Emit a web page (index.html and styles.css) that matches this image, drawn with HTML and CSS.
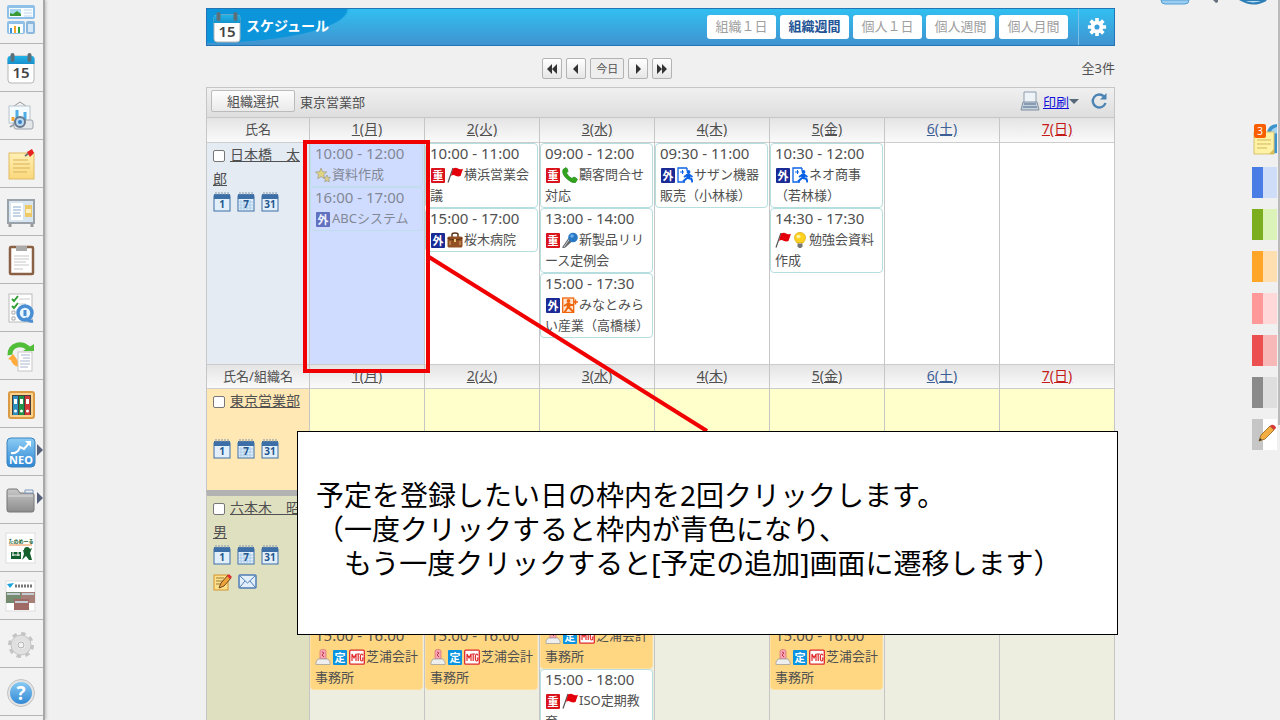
FILE: index.html
```html
<!DOCTYPE html>
<html lang="ja">
<head>
<meta charset="utf-8">
<title>スケジュール</title>
<link rel="stylesheet" href="styles.css">
</head>
<body>
<svg class="gradients" aria-hidden="true">
  <defs>
    <linearGradient id="g-blue" x1="0" y1="0" x2="0" y2="1"><stop offset="0" stop-color="#8ccdf5"/><stop offset="1" stop-color="#2f86d3"/></linearGradient>
    <linearGradient id="g-gray" x1="0" y1="0" x2="0" y2="1"><stop offset="0" stop-color="#c8c8c8"/><stop offset="1" stop-color="#8c8c8c"/></linearGradient>
    <linearGradient id="g-cal" x1="0" y1="0" x2="0" y2="1"><stop offset="0" stop-color="#22b4e8"/><stop offset="1" stop-color="#1690cc"/></linearGradient>
    <linearGradient id="g-note" x1="0" y1="0" x2="0" y2="1"><stop offset="0" stop-color="#fff0b4"/><stop offset="1" stop-color="#fbd87c"/></linearGradient>
  </defs>
</svg>
<svg class="symbols" aria-hidden="true">
  <symbol id="calendar15" viewBox="0 0 32 32">
    <rect x="3" y="4" width="26" height="27" rx="3" fill="#fff" stroke="#b5b5b5"/>
    <path d="M2.500 12V7a3 3 0 0 1 3-3h21a3 3 0 0 1 3 3v5z" fill="url(#g-cal)"/>
    <rect x="5.500" y="1" width="4" height="9" rx="2" fill="#5d6f78"/><rect x="22.500" y="1" width="4" height="9" rx="2" fill="#5d6f78"/>
    <text x="16" y="26" text-anchor="middle" font-size="15" font-weight="600" fill="#444">15</text>
  </symbol>
  <symbol id="cal-1" viewBox="0 0 18 20"><rect x="1" y="4" width="16" height="15" fill="#e2effa" stroke="#3c6ea8"/><rect x="1" y="2" width="16" height="5" fill="#3c6ea8"/><path d="M3 3V0M6 3V0M9 3V0M12 3V0M15 3V0" stroke="#8295a9"/><text x="9" y="16" text-anchor="middle" font-size="10" font-weight="700" fill="#24568e">1</text></symbol>
  <symbol id="cal-7" viewBox="0 0 18 20"><rect x="1" y="4" width="16" height="15" fill="#e2effa" stroke="#3c6ea8"/><path d="M4 8v10M7 8v10M10 8v10M13 8v10M2 10h14M2 13h14M2 16h14" stroke="#a9cce8"/><rect x="1" y="2" width="16" height="5" fill="#3c6ea8"/><path d="M3 3V0M6 3V0M9 3V0M12 3V0M15 3V0" stroke="#8295a9"/><text x="9" y="16" text-anchor="middle" font-size="10" font-weight="700" fill="#24568e">7</text></symbol>
  <symbol id="cal-31" viewBox="0 0 18 20"><rect x="1" y="4" width="16" height="15" fill="#e2effa" stroke="#3c6ea8"/><rect x="1" y="2" width="16" height="5" fill="#3c6ea8"/><path d="M3 3V0M6 3V0M9 3V0M12 3V0M15 3V0" stroke="#8295a9"/><text x="9" y="16" text-anchor="middle" font-size="10" font-weight="700" fill="#24568e">31</text></symbol>
  <symbol id="imp" viewBox="0 0 16 16"><rect x="1" y="1" width="14" height="15" rx="1" fill="#d9121c"/><text x="8" y="13" text-anchor="middle" font-size="11" font-weight="700" fill="#fff">重</text></symbol>
  <symbol id="out" viewBox="0 0 16 16"><rect x="1" y="1" width="14" height="15" rx="1" fill="#1b2b96"/><text x="8" y="13" text-anchor="middle" font-size="11" font-weight="700" fill="#fff">外</text></symbol>
  <symbol id="fixed" viewBox="0 0 16 16"><rect x="1" y="1" width="14" height="15" rx="1" fill="#0a93e0"/><text x="8" y="13" text-anchor="middle" font-size="11" font-weight="700" fill="#fff">定</text></symbol>
  <symbol id="mtg" viewBox="0 0 16 16"><rect x=".7" y="1.200" width="14.600" height="14" rx="1" fill="#fff" stroke="#e02a2a" stroke-width="1.300"/><path d="M3 12V5l2 4 2-4v7M7.500 5h3.500M9.200 5v7M14 6.500Q13.500 5 12.700 5 11.300 5.200 11.300 8.500t1.400 3.500Q14 12 14 9h-1.200" fill="none" stroke="#e02a2a" stroke-width="1.200"/></symbol>
  <symbol id="flag" viewBox="0 0 16 16"><path d="M1 15.500L6 1" stroke="#555" stroke-width="1.200"/><path d="M6 1.500q3-1.500 5 0t5 .2L13.500 9q-2.500 1-5-.3T4 9z" fill="#e3000b"/></symbol>
  <symbol id="star" viewBox="0 0 16 16"><path d="M6 1l1.700 3.800 4.100.1-3 2.800 1.100 4L6.200 9.600l-3.600 2.100 1-4L.5 5l4.100-.3z" fill="#e9cf2e" stroke="#7c6d35" stroke-width=".7"/><path d="M12 8l1.100 2.300 2.500.2-1.800 1.800.5 2.600-2.300-1.200-2.300 1.100.5-2.400-1.800-1.800 2.500-.3z" fill="#e3c33d" stroke="#6c633e" stroke-width=".6"/></symbol>
  <symbol id="bag" viewBox="0 0 16 16"><path d="M5 5V2.500Q5 1 8 1t3 1.500V5" fill="none" stroke="#5a3217" stroke-width="1.500"/><rect x=".5" y="4.500" width="15" height="11" rx="1.500" fill="#935025"/><path d="M.5 6Q8 10 15.500 6" fill="none" stroke="#5d2f10"/><path d="M3 9v4M13 9v4" stroke="#d9a86e"/><rect x="7" y="7" width="2" height="3" fill="#f0c980"/></symbol>
  <symbol id="phone" viewBox="0 0 16 16"><path d="M1 2.500L4 .5q2 1 2 4L4.500 6Q6 9.500 10 11.500L11.500 10q2.500 0 4 2.500l-2 3q-4 1-9-4T1 2.500z" fill="#32a51d" stroke="#167b15" stroke-width=".6"/></symbol>
  <symbol id="mic" viewBox="0 0 16 16"><path d="M6.500 6L0 15.500q2 1 4-.5l6-5.500z" fill="#64686c"/><path d="M7.500 7L2 15" stroke="#c5cbd0"/><circle cx="11" cy="5.500" r="4.800" fill="#2878c4"/><circle cx="10" cy="4" r="1.800" fill="#69aeea"/></symbol>
  <symbol id="leave" viewBox="0 0 16 16"><path d="M10 1H1v14h7M10 1v3" fill="none" stroke="#0a62e6" stroke-width="1.300"/><path d="M3 5h4M5.500 3v4" stroke="#0a62e6"/><circle cx="11.500" cy="5" r="1.900" fill="#0a62e6"/><path d="M9 7h4l.5 5h-4z" fill="#0a62e6"/><path d="M10 8L7 10M10 11l-4 3.500M11 11l3.500 1 1 3.500M12 7.500l3.500 2.500" fill="none" stroke="#0a62e6" stroke-width="2"/></symbol>
  <symbol id="arrive" viewBox="0 0 16 16"><rect x=".7" y="1" width="11" height="14.500" fill="#ffe4cf" stroke="#ee650b" stroke-width="1.300"/><circle cx="6.500" cy="4" r="1.900" fill="#ee650b"/><path d="M4.500 6h4l-.5 5.500H5z" fill="#ee650b"/><path d="M5.500 7L2 9M6 10l-3.500 5.500M6.500 10l5 5M7 8h5" fill="none" stroke="#ee650b" stroke-width="2"/><path d="M16 5h-4M13.500 2.500v5" stroke="#ee650b" stroke-width="1.500"/></symbol>
  <symbol id="bulb" viewBox="0 0 16 16"><path d="M5 11Q2.500 8.500 2.500 5.500a5.500 5 0 0 1 11 0Q13.500 8.500 11 11z" fill="#ffd21f" stroke="#d8a000" stroke-width=".7"/><path d="M5.500 11.500h5v3L9 16H7l-1.500-1.500z" fill="#777"/><ellipse cx="6.500" cy="4.500" rx="2" ry="1.800" fill="#fff3a5"/></symbol>
  <symbol id="stamp" viewBox="0 0 16 16"><path d="M5 10V2q0-1.500 3-1.500T11 2v8z" fill="#f5a7b1" stroke="#d75f73" stroke-width=".6"/><path d="M7 3l2 1-2 2 2 2" fill="none" stroke="#c93450"/><path d="M3 10h10l2 3v2.500H1V13z" fill="#eee" stroke="#999" stroke-width=".7"/></symbol>
  <symbol id="edit" viewBox="0 0 20 18"><rect x="1" y="2" width="14" height="15" fill="#ffe08a" stroke="#d2922c"/><path d="M3 5h8M3 8h8M3 11h6" stroke="#9b7a3b"/><path d="M6 15l2-5 7-8 3 3-7 8z" fill="#efa43a" stroke="#73471d"/><path d="M14 3l2-2 3 3-2 2z" fill="#dc3030"/></symbol>
  <symbol id="mail" viewBox="0 0 20 16"><rect x="1" y="1" width="17" height="13" rx="1" fill="#e3effb" stroke="#4e7db5" stroke-width="1.500"/><path d="M2 2l7.500 7L17 2M2 13l5-6M17 13l-5-6" fill="none" stroke="#4e7db5"/></symbol>
</svg>

<nav class="sidebar" aria-label="メニュー">
  <ul>
    <li><svg viewBox="0 0 32 32"><rect x="2" y="1" width="28" height="14" rx="2" fill="#8fc0ea"/><rect x="4" y="4" width="24" height="9" fill="#f7fcff"/><path d="M5 5h11v7H5z" fill="#a5d8f0"/><path d="M5 12v-3l3 1 4-3 4 3v2z" fill="#3c9a36"/><path d="M19 6h8M19 9h8M19 12h8" stroke="#c2d8eb"/><rect x="2" y="17" width="18" height="13" rx="2" fill="#8fc0ea"/><rect x="4" y="20" width="14" height="9" fill="#fff"/><path d="M6 24v5" stroke="#3292d7" stroke-width="2"/><path d="M10 22v7" stroke="#f5a42a" stroke-width="2"/><path d="M14 23v6" stroke="#2ba53a" stroke-width="2"/><rect x="21" y="17" width="9" height="13" rx="2" fill="#8cb8de"/><path d="M23 20h5v8h-5z" fill="#d6e9f8"/></svg></li>
    <li><svg viewBox="0 0 32 32"><use href="#calendar15"/></svg></li>
    <li><svg viewBox="0 0 32 32"><path d="M9 6l6-4 6 4" fill="none" stroke="#999"/><rect x="4" y="6" width="21" height="17" fill="#f4fbff" stroke="#b7c3cb"/><path d="M8 17v4" stroke="#f5a22f" stroke-width="3"/><path d="M12 10v11M20 12v9" stroke="#4daee7" stroke-width="3"/><path d="M5 27l8-5" stroke="#9aa0a8" stroke-width="2"/><rect x="9" y="20" width="19" height="9" rx="2" fill="#e4e7ea" stroke="#9ba2aa"/><circle cx="15" cy="22" r="5" fill="#b8d9f2" stroke="#66788a" stroke-width="2"/><circle cx="15" cy="22" r="2" fill="#3980c4"/></svg></li>
    <li><svg viewBox="0 0 32 32"><rect x="4" y="5" width="25" height="26" fill="url(#g-note)" stroke="#dfba62"/><path d="M8 12h15M8 16h17M8 20h17M8 24h14" stroke="#d9b25a"/><path d="M20 8l4-3" stroke="#777" stroke-width="2"/><path d="M22 4l5-3 2 4-4 4z" fill="#e52121"/></svg></li>
    <li><svg viewBox="0 0 32 32"><path d="M5 28v3M27 28v3" stroke="#999" stroke-width="3"/><rect x="3" y="4" width="26" height="23" fill="#d7e6f0" stroke="#9aa1a8" stroke-width="2"/><path d="M6 7h12v17H6z" fill="#fff"/><path d="M8 11h8M8 14h8M8 17h7M8 20h8" stroke="#88aacc"/><path d="M20 9h7v12h-7z" fill="#efc967"/><path d="M21 13h5v4h-5z" fill="#fff0bd"/></svg></li>
    <li><svg viewBox="0 0 32 32"><rect x="5" y="3" width="23" height="27" rx="1" fill="#fff" stroke="#8a6144" stroke-width="2.500"/><path d="M11 2h11v5H11z" fill="#aaa"/><path d="M9 12h15M9 15h15M9 18h12M9 21h15M9 25h9" stroke="#c7c7c7"/></svg></li>
    <li><svg viewBox="0 0 32 32"><rect x="4" y="2" width="23" height="28" fill="#fff" stroke="#bbb"/><path d="M7 7l2 2 4-5M7 14l2 2 4-5" fill="none" stroke="#319f35" stroke-width="2"/><path d="M7 19h3v3H7zM7 25h3v3H7z" fill="#fff" stroke="#aaa"/><path d="M14 7h11M14 12h7" stroke="#ccc"/><circle cx="20" cy="21" r="7" fill="#e9f5ff" stroke="#4a8fd3" stroke-width="3.500"/><path d="M20 26q4 4 8 3" fill="none" stroke="#4a8fd3" stroke-width="3"/><path d="M20 18v6" stroke="#4a8fd3" stroke-width="3"/></svg></li>
    <li><svg viewBox="0 0 32 32"><path d="M5 15A10 9 0 0 1 24 10" fill="none" stroke="#52bd39" stroke-width="5"/><path d="M18 11h11V4z" fill="#52bd39"/><path d="M8 14l-5 5 3 1q1 5 7 7l2-5q-3-1-4-4z" fill="#ffac3d"/><rect x="13" y="12" width="14" height="19" fill="#fff" stroke="#c5c5c5"/><path d="M16 15h9M18 18h7M15 21h10M15 24h10M15 27h8" stroke="#a8b4cf"/></svg></li>
    <li><svg viewBox="0 0 32 32"><rect x="4" y="4" width="25" height="26" rx="2" fill="#ffd28c" stroke="#db9b45" stroke-width="2"/><path d="M7 7h19v20H7z" fill="#443f3d"/><path d="M8 8h5v19H8z" fill="#2d8fc0"/><path d="M14 8h5v19h-5z" fill="#209249"/><path d="M20 8h5v19h-5z" fill="#cf3737"/><path d="M9 11h3v5H9zM15 11h3v5h-3zM21 11h3v5h-3z" fill="#fff"/><g fill="#fff"><circle cx="10.500" cy="23" r="1.500"/><circle cx="16.500" cy="23" r="1.500"/><circle cx="22.500" cy="23" r="1.500"/></g></svg></li>
    <li class="has-menu"><svg viewBox="0 0 32 32"><rect x="2" y="2" width="28" height="29" rx="4" fill="url(#g-blue)" stroke="#3b83bd"/><path d="M6 17q7 1 9-6l4 2 6-7" fill="none" stroke="#fff" stroke-width="2"/><path d="M20 5h6v6z" fill="#fff"/><text x="16" y="28" text-anchor="middle" font-size="11" font-weight="700" fill="#fff">NEO</text></svg></li>
    <li class="has-menu"><svg viewBox="0 0 32 32"><path d="M2 26V7q0-2 2-2h8l3 4h12q2 0 2 2v15q0 2-2 2H4q-2 0-2-2z" fill="url(#g-gray)" stroke="#777"/><path d="M3 12h25" stroke="#ddd"/><path d="M20 6h8v3h-8z" fill="#eee" stroke="#7d98bd"/></svg></li>
    <li><svg viewBox="0 0 32 32"><rect x="1" y="1" width="29" height="30" fill="#fff" stroke="#ddd"/><text x="16" y="11" text-anchor="middle" font-size="5" font-weight="700" fill="#14602c">たのめーる</text><path d="M4 13h23" stroke="#ed8e4a"/><path d="M6 20h10v7H6zM18 18h5l4-2-2 5 2 7h-3l-3-4-4 4 2-6z" fill="#14602c"/><path d="M8 20v4M13 20v4M7 23h8" stroke="#fff"/><circle cx="22" cy="18" r="3" fill="#14602c"/></svg></li>
    <li><svg viewBox="0 0 32 32"><rect x="1" y="1" width="29" height="30" fill="#fff" stroke="#ddd"/><path d="M2 4l7-1-4 5z" fill="#18a3dc"/><path d="M10 6h18" stroke="#777" stroke-width="3" stroke-dasharray="2 1"/><path d="M1 12h15v11H1z" fill="#758b70"/><path d="M16 12h14v11H16z" fill="#a77f79"/><path d="M9 19h15v11H9z" fill="#9f6965"/><path d="M2 14h13M17 14h12M10 22h13" stroke="#c2cdd4" stroke-width="2"/></svg></li>
    <li><svg viewBox="0 0 32 32"><circle cx="16" cy="17" r="11.500" fill="none" stroke="#c4c4c4" stroke-width="3" stroke-dasharray="4.500 4.500"/><circle cx="16" cy="17" r="7" fill="none" stroke="#e0e0e0" stroke-width="6"/><circle cx="16" cy="17" r="10" fill="none" stroke="#c4c4c4"/><circle cx="16" cy="17" r="3" fill="#f2f2f2" stroke="#b0b0b0"/></svg></li>
    <li><svg viewBox="0 0 32 32"><circle cx="16" cy="17" r="12" fill="url(#g-blue)" stroke="#e4e4e4" stroke-width="2"/><circle cx="16" cy="17" r="13.500" fill="none" stroke="#aaa" stroke-width=".7"/><text x="16" y="24" text-anchor="middle" font-size="19" font-weight="700" fill="#fff">?</text></svg></li>
    <li></li>
  </ul>
</nav>

<main class="content">
  <header class="titlebar">
    <svg class="title-icon" viewBox="0 0 32 32"><use href="#calendar15"/></svg>
    <h1>スケジュール</h1>
    <div class="tabs">
      <button type="button">組織１日</button>
      <button type="button" class="active">組織週間</button>
      <button type="button">個人１日</button>
      <button type="button">個人週間</button>
      <button type="button">個人月間</button>
    </div>
    <button type="button" class="settings" aria-label="設定"><svg viewBox="0 0 22 22"><g stroke="#fff" stroke-width="4"><path d="M11 1v20M1 11h20M4 4l14 14M18 4L4 18"/></g><circle cx="11" cy="11" r="7" fill="#fff"/><circle cx="11" cy="11" r="2.800" fill="#369fdb"/></svg></button>
  </header>

  <div class="pager">
    <button type="button" aria-label="前の週"><svg viewBox="0 0 12 12"><path d="M6 1v10L1 6zM11 1v10L6 6z"/></svg></button>
    <button type="button" aria-label="前の日"><svg viewBox="0 0 12 12"><path d="M8 1v10L3 6z"/></svg></button>
    <button type="button" class="today">今日</button>
    <button type="button" aria-label="次の日"><svg viewBox="0 0 12 12"><path d="M4 1v10l5-5z"/></svg></button>
    <button type="button" aria-label="次の週"><svg viewBox="0 0 12 12"><path d="M1 1v10l5-5zM6 1v10l5-5z"/></svg></button>
    <span class="count">全3件</span>
  </div>

  <div class="toolbar">
    <button type="button" class="select-org">組織選択</button>
    <span>東京営業部</span>
    <div class="tools">
      <svg class="printer" viewBox="0 0 20 20"><path d="M4 11V1h12v10" fill="#eef3f8" stroke="#8d9cab"/><path d="M1 19l2-8h14l2 8z" fill="#c6d2de" stroke="#7f90a2"/><path d="M4 13h12M3 16h14" stroke="#738ba4" stroke-width="1.500"/></svg>
      <a href="#">印刷</a><span class="caret"></span>
      <svg class="reload" viewBox="0 0 18 18"><path d="M14 4.500A6.500 6.500 0 1 0 15.500 11" fill="none" stroke="#4a83b4" stroke-width="2.400"/><path d="M10 7.500h6.500V1z" fill="#4a83b4"/></svg>
    </div>
  </div>

  <table class="schedule">
    <colgroup><col class="name-col"><col><col><col><col><col><col><col></colgroup>
    <tbody>
      <tr class="days"><th>氏名</th><th><a href="#">1(月)</a></th><th><a href="#">2(火)</a></th><th><a href="#">3(水)</a></th><th><a href="#">4(木)</a></th><th><a href="#">5(金)</a></th><th class="sat"><a href="#">6(土)</a></th><th class="sun"><a href="#">7(日)</a></th></tr>
      <tr class="own">
        <td class="person">
          <input type="checkbox" id="p1"><label for="p1"><a href="#">日本橋　太郎</a></label>
          <div class="links"><svg><use href="#cal-1"/></svg><svg><use href="#cal-7"/></svg><svg><use href="#cal-31"/></svg></div>
        </td>
        <td class="selected">
          <div class="event"><time>10:00 - 12:00</time><p><svg><use href="#star"/></svg>資料作成</p></div>
          <div class="event"><time>16:00 - 17:00</time><p><svg><use href="#out"/></svg>ABCシステム</p></div>
        </td>
        <td>
          <div class="event"><time>10:00 - 11:00</time><p><svg><use href="#imp"/></svg><svg><use href="#flag"/></svg>横浜営業会議</p></div>
          <div class="event"><time>15:00 - 17:00</time><p><svg><use href="#out"/></svg><svg><use href="#bag"/></svg>桜木病院</p></div>
        </td>
        <td>
          <div class="event"><time>09:00 - 12:00</time><p><svg><use href="#imp"/></svg><svg><use href="#phone"/></svg>顧客問合せ対応</p></div>
          <div class="event"><time>13:00 - 14:00</time><p><svg><use href="#imp"/></svg><svg><use href="#mic"/></svg>新製品リリース定例会</p></div>
          <div class="event"><time>15:00 - 17:30</time><p><svg><use href="#out"/></svg><svg><use href="#arrive"/></svg>みなとみらい産業（高橋様）</p></div>
        </td>
        <td>
          <div class="event"><time>09:30 - 11:00</time><p><svg><use href="#out"/></svg><svg><use href="#leave"/></svg>サザン機器販売（小林様）</p></div>
        </td>
        <td>
          <div class="event"><time>10:30 - 12:00</time><p><svg><use href="#out"/></svg><svg><use href="#leave"/></svg>ネオ商事（若林様）</p></div>
          <div class="event"><time>14:30 - 17:30</time><p><svg><use href="#flag"/></svg><svg><use href="#bulb"/></svg>勉強会資料作成</p></div>
        </td>
        <td></td><td></td>
      </tr>
      <tr class="days"><th>氏名/組織名</th><th><a href="#">1(月)</a></th><th><a href="#">2(火)</a></th><th><a href="#">3(水)</a></th><th><a href="#">4(木)</a></th><th><a href="#">5(金)</a></th><th class="sat"><a href="#">6(土)</a></th><th class="sun"><a href="#">7(日)</a></th></tr>
      <tr class="org">
        <td class="person">
          <input type="checkbox" id="p2"><label for="p2"><a href="#">東京営業部</a></label>
          <div class="links lower"><svg><use href="#cal-1"/></svg><svg><use href="#cal-7"/></svg><svg><use href="#cal-31"/></svg></div>
        </td>
        <td></td><td></td><td></td><td></td><td></td><td></td><td></td>
      </tr>
      <tr class="member">
        <td class="person">
          <input type="checkbox" id="p3"><label for="p3"><a href="#">六本木　昭男</a></label>
          <div class="links"><svg><use href="#cal-1"/></svg><svg><use href="#cal-7"/></svg><svg><use href="#cal-31"/></svg></div>
          <div class="links actions"><svg><use href="#edit"/></svg><svg><use href="#mail"/></svg></div>
        </td>
        <td class="late"><div class="event busy"><time>15:00 - 16:00</time><p><svg><use href="#stamp"/></svg><svg><use href="#fixed"/></svg><svg><use href="#mtg"/></svg>芝浦会計事務所</p></div></td>
        <td class="late"><div class="event busy"><time>15:00 - 16:00</time><p><svg><use href="#stamp"/></svg><svg><use href="#fixed"/></svg><svg><use href="#mtg"/></svg>芝浦会計事務所</p></div></td>
        <td class="midday">
          <div class="event busy"><p class="after-time"><svg><use href="#stamp"/></svg><svg><use href="#fixed"/></svg><svg><use href="#mtg"/></svg>芝浦会計事務所</p></div>
          <div class="event"><time>15:00 - 18:00</time><p><svg><use href="#imp"/></svg><svg><use href="#flag"/></svg>ISO定期教育</p></div>
        </td>
        <td></td>
        <td class="late"><div class="event busy"><time>15:00 - 16:00</time><p><svg><use href="#stamp"/></svg><svg><use href="#fixed"/></svg><svg><use href="#mtg"/></svg>芝浦会計事務所</p></div></td>
        <td></td><td></td>
      </tr>
    </tbody>
  </table>

  <svg class="leader" viewBox="0 0 278 175" aria-hidden="true"><path d="M0 1L278 175" stroke="#f00000" stroke-width="4"/></svg>
  <aside class="callout">
    <p>予定を登録したい日の枠内を2回クリックします。</p>
    <p>（一度クリックすると枠内が青色になり、</p>
    <p>　もう一度クリックすると[予定の追加]画面に遷移します）</p>
  </aside>
</main>

<svg class="top-icons" viewBox="0 0 112 6" aria-hidden="true"><path d="M2 0q0 4 4 4h20q4 0 4-4z" fill="#9ccdf0" stroke="#4f9fd6"/><path d="M54 0h5v2l-2 1z" fill="#66717d"/><path d="M82 0q12 7 25 0z" fill="#b9ddf3" stroke="#2f7fb7" stroke-width="2"/></svg>
<aside class="rail">
  <div class="memo"><svg viewBox="0 0 25 36"><path d="M25 4q-11 0-11 16t11 13z" fill="#3f93cb"/><path d="M25 7q-6 1-7 8l7-2z" fill="#a7d4f0"/><path d="M2 12h20v22H2z" fill="#fff2a5" stroke="#d7c273"/><path d="M5 20h14M5 24h14M5 28h10" stroke="#cfb75a"/><path d="M17 34l5-5v5z" fill="#d8bd57"/></svg><span>3</span></div>
  <div class="tag blue"></div><div class="tag green"></div><div class="tag orange"></div><div class="tag pink"></div><div class="tag red"></div><div class="tag gray"></div>
  <div class="tag pen"><svg viewBox="0 0 18 18"><path d="M1 17l2-6L12 2l4 4-9 9z" fill="#f2ae43" stroke="#a7772d"/><path d="M12 2l1-1q2-1 4 1t0 3l-1 1z" fill="#d83b3b"/><path d="M1 17l1-3 2 2z" fill="#333"/></svg></div>
</aside>
<div class="scroll"></div>
</body>
</html>
```

FILE: styles.css
```css
* { box-sizing: border-box; }
body {
  margin: 0;
  height: 100vh;
  display: flex;
  overflow: hidden;
  position: relative;
  background: #f0f0f0;
  color: #505050;
  font-family: "Noto Sans", "Noto Sans CJK JP", sans-serif;
  font-size: 13px;
}
svg { display: block; }
h1, p, ul { margin: 0; padding: 0; }
button { font: inherit; color: inherit; padding: 0; cursor: pointer; }
a { color: inherit; }
.gradients { position: absolute; width: 0; height: 0; }
.symbols { display: none; }

/* left menu */
.sidebar {
  flex: none;
  width: 45px;
  background: #f2f2f2;
  border-right: 2px solid #a8a8a8;
  box-shadow: 1px 0 3px #bbb;
}
.sidebar ul { list-style: none; margin-top: -4px; }
.sidebar li {
  height: 48px;
  display: flex;
  align-items: center;
  padding-left: 5px;
  border-bottom: 1px solid #b4b4b4;
}
.sidebar svg { width: 32px; height: 32px; }
.has-menu::after {
  content: "";
  margin-top: -4px;
  border: 6px solid transparent;
  border-left-color: #55607a;
  border-right: 0;
}

/* main column */
.content { flex: 1; min-width: 0; margin: 8px 165px 0 161px; position: relative; }
.titlebar {
  height: 38px;
  display: flex;
  align-items: center;
  border: 1px solid #2274b5;
  background:
    radial-gradient(ellipse 142px 34px at 0 0, #0c95da 98%, transparent 100%),
    linear-gradient(#31bff1, #4093cf);
}
.title-icon { width: 32px; height: 32px; margin-left: 4px; }
.titlebar h1 { flex: 1; margin-left: 3px; padding-bottom: 4px; font-size: 14px; font-weight: 700; color: #fff; }
.tabs { display: flex; gap: 4px; margin-right: 10px; }
.tabs button {
  width: 69px;
  height: 24px;
  padding-bottom: 3px;
  border: 0;
  border-radius: 3px;
  background: #fff;
  color: #a0a0a0;
}
.tabs .active { color: #1f5596; font-weight: 700; }
.settings {
  width: 36px;
  height: 36px;
  border: 0;
  border-left: 1px solid #79c1ea;
  background: none;
  display: flex;
  align-items: center;
  justify-content: center;
}
.settings svg { width: 20px; height: 20px; }

.pager { display: flex; align-items: center; gap: 4px; height: 41px; padding: 4px 0 0 37%; }
.pager button {
  width: 20px;
  height: 21px;
  display: flex;
  align-items: center;
  justify-content: center;
  border: 1px solid #b3b3b3;
  border-radius: 2px;
  background: linear-gradient(#fff, #e6e6e6);
}
.pager .today { width: 34px; padding-bottom: 2px; font-size: 11px; background: #eee; }
.pager svg { width: 12px; height: 12px; fill: #333; }
.count { margin-left: auto; padding-bottom: 2px; }

.toolbar {
  display: flex;
  align-items: center;
  gap: 5px;
  height: 31px;
  padding: 0 6px 3px 4px;
  border: 1px solid #c6c6c6;
  background: linear-gradient(#f0f0f0, #dedede);
}
.select-org {
  width: 84px;
  height: 22px;
  padding-bottom: 2px;
  border: 1px solid #bbb;
  border-radius: 2px;
  background: linear-gradient(#fdfdfd, #eaeaea);
}
.tools { margin-left: auto; display: flex; align-items: center; }
.tools a { color: #1111dd; margin-left: 3px; }
.printer { width: 20px; height: 20px; }
.reload { width: 18px; height: 18px; }
.caret { border: 5px solid transparent; border-top-color: #56687a; border-bottom: 0; margin-right: 11px; }

/* schedule grid */
.schedule { width: 100%; table-layout: fixed; border-spacing: 0; border-right: 1px solid #c6c6c6; }
.name-col { width: 103px; }
.schedule th, .schedule td { padding: 0; border-left: 1px solid #c6c6c6; vertical-align: top; }
.schedule .days th {
  height: 25px;
  padding-bottom: 2px;
  border-bottom: 1px solid #ccc;
  background: linear-gradient(#e4e4e4, #fafafa);
  font-weight: inherit;
  line-height: 20px;
  vertical-align: middle;
}
.days a { font-size: 14px; }
.days .sat { color: #3c5f96; }
.days .sun { color: #c51a1a; }
.own { height: 221px; background: #fff; }
.own + .days th { border-top: 1px solid #ccc; }
.own .person { background: #e4ebf2; }
.org { height: 101px; background: #ffc; }
.org .person { background: #ffe8b4; }
.member { height: 260px; background: #edeee0; }
.member td { border-top: 6px solid #b2b2b2; }
.member .person { background: #dfe0c0; }

.schedule .person { padding-left: 6px; line-height: 24px; font-size: 14px; word-break: break-all; }
.person input {
  appearance: none;
  width: 12px;
  height: 12px;
  margin: 0 5px 0 0;
  vertical-align: -2px;
  border: 1px solid #777;
  border-radius: 2px;
  background: #fff;
}
.links { display: flex; gap: 6px; padding-top: 1px; }
.links svg { width: 18px; height: 20px; }
.lower { padding-top: 26px; }
.actions { padding-top: 8px; gap: 5px; }
.actions svg { width: 20px; height: 18px; }

.event {
  margin-right: 1px;
  padding: 0 0 1px 4px;
  border: 1px solid #b7dedf;
  border-radius: 4px;
  background: #fff;
  line-height: 21px;
}
.event time { display: block; height: 20px; line-height: 19px; font-size: 15px; }
.event p { word-break: break-all; line-break: loose; }
.event .after-time { padding-top: 20px; }
.event svg { display: inline-block; width: 16px; height: 16px; margin-right: 1px; vertical-align: -4px; }
.busy { background: #ffd681; border-color: #ffdf9b; }
.schedule .late { padding-top: 129px; }
.schedule .midday { padding-top: 108px; }

.selected { position: relative; background: #cfdcff; }
.selected .event { background: none; opacity: 0.6; }
.selected::after {
  content: "";
  position: absolute;
  z-index: 2;
  inset: -3px -6px -9px -7px;
  border: 4px solid #f00000;
}

/* annotation */
.leader { position: absolute; z-index: 2; left: 223px; top: 248px; width: 278px; height: 175px; overflow: visible; }
.callout {
  position: absolute;
  z-index: 3;
  left: 91px;
  right: -3px;
  top: 423px;
  padding: 46px 18px 54px;
  border: 1px solid #000;
  background: #fff;
  color: #000;
  font-size: 28px;
  line-height: 34px;
  white-space: nowrap;
}

/* right edge */
.top-icons { position: absolute; top: 0; right: 9px; width: 112px; height: 6px; }
.rail { position: absolute; top: 120px; right: 3px; width: 25px; display: flex; flex-direction: column; gap: 11px; }
.memo { position: relative; height: 36px; }
.memo svg { width: 25px; height: 36px; }
.memo span {
  position: absolute;
  left: 2px;
  top: 4px;
  width: 12px;
  border-radius: 2px;
  background: #f85d00;
  color: #fff;
  font-size: 10px;
  line-height: 14px;
  text-align: center;
}
.tag { height: 31px; border-left: 11px solid; background: #d0ddf8; }
.blue { border-left-color: #4a7ce6; }
.green { border-left-color: #7aae1f; background: #dbf2b8; }
.orange { border-left-color: #ffa629; background: #ffdfb0; }
.pink { border-left-color: #ff9999; background: #ffd9d9; }
.red { border-left-color: #ec4f4f; background: #f8b8b8; }
.gray { border-left-color: #8a8a8a; background: #dedede; }
.pen { border-left-color: #c6c6c6; background: #fff; padding-top: 5px; }
.pen svg { width: 18px; height: 18px; margin-left: -5px; }
.scroll { position: absolute; top: 0; right: 0; width: 2px; height: 59%; background: #bbb; }
```
